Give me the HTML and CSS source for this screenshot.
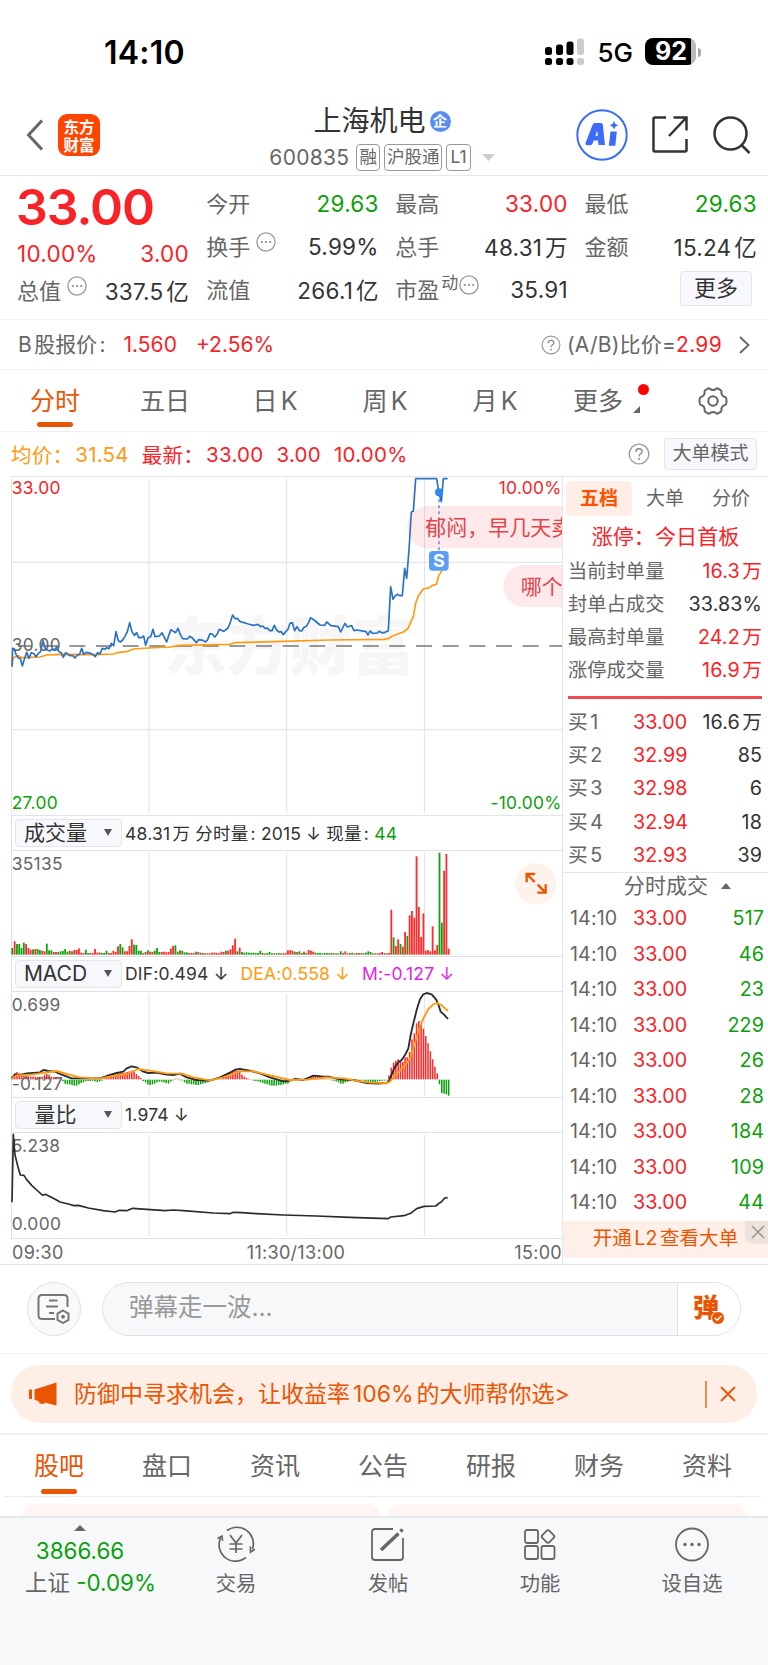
FILE: index.html
```html
<!DOCTYPE html>
<html lang="zh-CN">
<head>
<meta charset="utf-8">
<title>上海机电 600835</title>
<link rel="stylesheet" href="styles.css">
</head>
<body>
<div class="status">
  <span class="clock">14:10</span>
  <div class="status-right">
    <svg class="signal" width="39" height="28" viewBox="0 0 39 28">
      <g fill="#000"><rect y="9" width="7" height="8" rx="2.5"/><rect x="11" y="6.5" width="7" height="10.5" rx="2.5"/><rect x="21.500" y="3.500" width="7" height="13.500" rx="2.500"/><rect y="20" width="7" height="7" rx="2.500"/><rect x="11" y="20" width="7" height="7" rx="2.500"/><rect x="21.500" y="20" width="7" height="7" rx="2.500"/></g>
      <g fill="#ccc"><rect x="32" y="0.500" width="7" height="16.500" rx="2.500"/><rect x="32" y="20" width="7" height="7" rx="2.500"/></g>
    </svg>
    <span class="net">5G</span>
    <div class="battery"><span>92</span></div><i class="battery-tip"></i>
  </div>
</div>

<header class="header">
  <div class="head-left">
    <svg width="18" height="32" viewBox="0 0 18 32"><path d="M16 1.500 2.500 16 16 30.500" fill="none" stroke="#666" stroke-width="3"/></svg>
    <div class="logo"><span>东方</span><span>财富</span></div>
  </div>
  <div class="head-mid">
    <div class="title">上海机电<i class="qi">企</i></div>
    <div class="sub"><span class="code">600835</span><b>融</b><b>沪股通</b><b>L1</b><svg width="13" height="7" viewBox="0 0 13 7"><path d="M0 0h13l-6.500 7z" fill="#ccc"/></svg></div>
  </div>
  <div class="head-right">
    <svg width="52" height="52" viewBox="0 0 52 52"><circle cx="26" cy="26" r="24.700" fill="#fff" stroke="#3b6bf8" stroke-width="2"/><g fill="#3b6bf8"><path fill-rule="evenodd" d="M9.700 33.500 16.500 16q.8-2 2.500-2h6q1.500 0 1.800 1.600L29 36h-6.500l-.5-4.500h-4.200l-1.200 3q-.7 1.800-2.400 1.800h-3.200q-2-.3-1.300-2.800zM19.300 26.800h2.500l-.5-5z"/><path d="M34.500 22.500h6.300l-1.500 14.200h-6.500z"/><path d="m38 12 1.400 2.900 2.900 1.400-2.900 1.400-1.400 2.900-1.400-2.900-2.900-1.400 2.900-1.400z"/></g></svg>
    <svg width="36" height="37" viewBox="0 0 36 37" fill="none" stroke="#333" stroke-width="2.500"><path d="M14 1.500H3q-1.500 0-1.500 1.500v31q0 1.500 1.500 1.500h30q1.500 0 1.500-1.500V23M21.500 1.500h13v13M34 2 17 20"/></svg>
    <svg width="38" height="38" viewBox="0 0 38 38" fill="none" stroke="#333" stroke-width="2.500"><circle cx="17.500" cy="17.500" r="16"/><path d="m28.500 29 8 8"/></svg>
  </div>
</header>

<section class="quote">
  <div class="q-col q-main">
    <div class="price">33.00</div>
    <div class="row red"><span>10.00%</span><span>3.00</span></div>
    <div class="row"><label>总值<svg class="dots" viewBox="0 0 20 20"><use href="#i-dots"/></svg></label><span>337.5亿</span></div>
  </div>
  <div class="q-col">
    <div class="row"><label>今开</label><span class="green">29.63</span></div>
    <div class="row"><label>换手<svg class="dots" viewBox="0 0 20 20"><use href="#i-dots"/></svg></label><span>5.99%</span></div>
    <div class="row"><label>流值</label><span>266.1亿</span></div>
  </div>
  <div class="q-col">
    <div class="row"><label>最高</label><span class="red">33.00</span></div>
    <div class="row"><label>总手</label><span>48.31万</span></div>
    <div class="row"><label>市盈<sup>动</sup><svg class="dots tight" viewBox="0 0 20 20"><use href="#i-dots"/></svg></label><span>35.91</span></div>
  </div>
  <div class="q-col">
    <div class="row"><label>最低</label><span class="green">29.63</span></div>
    <div class="row"><label>金额</label><span>15.24亿</span></div>
    <div class="row end"><button class="more">更多</button></div>
  </div>
</section>

<section class="bshare">
  <span class="b-label">B股报价:</span><span class="red b-price">1.560</span><span class="red">+2.56%</span>
  <svg class="help" viewBox="0 0 22 22"><use href="#i-help"/></svg>
  <span class="b-cmp">(A/B)比价=</span><span class="red ratio">2.99</span>
  <svg class="chev" width="11" height="18" viewBox="0 0 11 18"><path d="m1 1 8.500 8L1 17" fill="none" stroke="#666" stroke-width="1.800"/></svg>
</section>

<nav class="ktabs">
  <a class="on">分时</a><a>五日</a><a>日K</a><a>周K</a><a>月K</a>
  <a class="kmore">更多<i class="reddot"></i><i class="corner"></i></a>
  <a class="gear"><svg width="30" height="30" viewBox="0 0 30 30" fill="none" stroke="#666" stroke-width="2"><circle cx="15" cy="15" r="4.700"/><path d="M10.500 2.300q1.700 0 2.300 1.200 2.200 1 4.400 0 .6-1.200 2.300-1.200l3.600 2.200q.8 1.500.2 2.800.7 2.500 2.900 3.400 1.300 0 2 1.500l.3 2.800-.3 2.800q-.7 1.500-2 1.500-2.200.9-2.900 3.400.6 1.300-.2 2.800l-3.600 2.200q-1.700 0-2.300-1.200-2.200-1-4.400 0-.6 1.200-2.300 1.200l-3.600-2.200q-.8-1.500-.2-2.800-.7-2.500-2.900-3.400-1.300 0-2-1.500L1.500 15l.3-2.800q.7-1.500 2-1.500 2.200-.9 2.900-3.400-.6-1.300.2-2.800z"/></svg></a>
</nav>

<section class="info">
  <span class="orange i1">均价：</span><span class="orange i2">31.54</span>
  <span class="red i3">最新：</span><span class="red i4">33.00</span><span class="red i5">3.00</span><span class="red">10.00%</span>
  <svg class="help big" viewBox="0 0 22 22"><use href="#i-help"/></svg>
  <button class="mode">大单模式</button>
</section>

<main class="board">
  <div class="charts">
    <svg class="c-price" viewBox="33 18 1656 1020">
      <text class="wm" x="492" y="596">东方财富</text>
      <g stroke="#e3e5ec" fill="none" stroke-width="3.500">
        <path d="M447 27V1030M860 27V1030M1273.500 27V1030M34.500 277H1689M34.500 779H1689"/>
        <path d="M34.500 1038V19.500H1689M34.500 1036.500H1689" stroke-width="3"/>
      </g>
      <path d="M54 528H1689" stroke="#777" stroke-width="4.500" stroke-dasharray="48 32" stroke-dashoffset="6"/>
      <text class="ax" x="35" y="544">30.00</text>
      <polyline class="ln avg" points="36,588 40,563 55,557 65,563 120,561 140,555 180,553 290,554 340,552 352,548 380,545 400,537 445,534 510,531 540,526 690,523 705,518 850,514 990,510 1152,508 1167,505 1177,498 1212,485 1224,475 1240,440 1247,400 1255,378 1270,357 1289,353 1297,346 1309,343 1317,315 1324,305 1332,288 1342,272"/>
      <polyline class="ln now" points="36,590 38,535 44,540 48,553 54,563 61,566 67,588 73,568 80,547 87,565 94,548 102,551 108,560 116,549 122,545 129,512 136,537 149,543 156,538 163,540 170,531 177,545 184,548 190,562 197,548 210,557 218,557 225,564 232,555 239,553 245,535 251,553 259,547 272,550 279,554 286,560 293,548 300,552 307,535 314,538 320,533 327,536 334,520 341,527 348,485 355,512 361,516 368,510 375,499 382,485 389,458 396,485 403,496 410,488 416,503 424,503 431,498 437,526 444,503 452,500 459,478 465,500 478,498 486,488 493,502 500,516 506,497 513,479 520,484 527,488 534,475 541,494 548,506 562,507 569,499 576,503 589,518 596,509 609,511 617,516 623,509 630,491 637,492 644,501 651,493 658,478 671,484 684,474 691,457 698,435 705,446 712,445 719,454 745,462 761,466 774,463 781,470 788,468 795,475 802,474 809,482 816,482 823,466 830,480 837,486 844,485 850,494 857,485 864,478 870,460 877,458 884,482 891,470 898,482 905,483 912,472 919,469 926,457 932,443 946,453 960,465 974,466 980,456 993,467 1015,470 1022,486 1035,460 1042,471 1055,467 1062,482 1070,480 1098,485 1104,495 1110,483 1118,490 1131,489 1138,484 1145,488 1152,488 1165,482 1172,350 1179,388 1185,378 1192,373 1200,377 1207,377 1214,295 1220,325 1227,240 1234,126 1240,124 1247,26 1310,26 1317,70 1324,95 1330,26 1343,26"/>
      <path d="M1317 70V244" stroke="#3d83f0" stroke-width="4" stroke-dasharray="9 9"/>
      <circle cx="1317" cy="67" r="12" fill="#2f86f6"/>
      <path d="M1689 108H1285a63 63 0 0 0 0 127H1689zM1689 285H1573a63 63 0 0 0 0 126H1689z" fill="#f04a50" fill-opacity=".12"/>
      <text class="dm" x="1276" y="195">郁闷，早几天卖</text>
      <text class="dm" x="1562" y="371">哪个</text>
      <rect x="1287" y="243" width="59" height="59" rx="11" fill="#5c9df8"/>
      <text class="mark" x="1316.500" y="292">S</text>
      <text class="ax r" x="35" y="73">33.00</text><text class="ax g" x="35" y="1016">27.00</text>
      <text class="ax r e" x="1685" y="73">10.00%</text><text class="ax g e" x="1685" y="1016">-10.00%</text>
    </svg>

    <div class="ind"><button>成交量<i></i></button><span class="vol-info">48.31万 分时量: 2015 <em>↓</em> 现量: <span class="green">44</span></span></div>
    <svg class="c-sub" id="vol" viewBox="33 120 1656 321">
      <path class="grid" d="M447 128V432M860 128V432M1273.500 128V432"/>
      <path class="frame" d="M34.500 441V121.500H1689M34.500 439.500H1689"/>
      <g id="vol-bars"></g>
      <text class="ax" x="35" y="180">35135</text>
      <circle cx="1607.500" cy="220.500" r="61.500" fill="#fef2ec"/>
      <path d="M1605 192h-25v25M1580 192l24 24M1612 248h25v-25M1637 248l-24-24" fill="none" stroke="#ea5504" stroke-width="7"/>
    </svg>

    <div class="ind"><button>MACD<i></i></button><span class="macd-info"><span>DIF:0.494 <em>↓</em></span><span class="orange">DEA:0.558 <em>↓</em></span><span class="purple">M:-0.127 <em>↓</em></span></span></div>
    <svg class="c-sub" viewBox="33 543 1656 321">
      <path class="grid" d="M447 551V856M860 551V856M1273.500 551V856"/>
      <path class="frame" d="M34.500 864V544.500H1689M34.500 862.500H1689"/>
      <g id="macd-bars"></g>
      <text class="ax" x="35" y="603">0.699</text><text class="ax" x="35" y="840">-0.127</text>
      <polyline class="ln thick dark" points="36,805 45,793 60,795 80,790 120,787 130,780 145,783 165,785 185,794 215,805 260,805 300,805 320,798 350,789 370,785 380,775 395,769 412,773 430,785 445,789 470,788 500,794 520,795 540,791 560,802 590,810 630,812 660,802 690,788 705,779 720,777 745,781 780,790 810,802 850,814 870,812 885,807 910,810 940,797 965,799 985,800 1020,808 1060,810 1100,819 1130,821 1160,819 1168,810 1175,793 1185,770 1195,757 1205,750 1215,735 1225,715 1232,675 1240,640 1250,600 1260,568 1270,553 1280,549 1295,553 1308,568 1315,583 1322,605 1332,614 1344,627"/>
      <polyline class="ln thick avg" points="36,805 50,796 100,793 170,783 200,792 240,802 300,806 340,798 380,792 415,777 450,782 500,790 545,791 580,802 630,811 670,802 720,784 760,784 800,794 870,810 920,809 980,802 1030,805 1080,814 1110,818 1160,819 1170,815 1185,796 1200,782 1220,760 1230,745 1240,715 1255,665 1270,625 1285,597 1300,583 1312,579 1325,586 1344,603"/>
    </svg>

    <div class="ind"><button>量比<i></i></button><span class="macd-info"><span>1.974 <em>↓</em></span></span></div>
    <svg class="c-sub" viewBox="33 276 1656 321">
      <path class="grid" d="M447 284V588M860 284V588M1273.500 284V588"/>
      <path class="frame" d="M34.500 597V277.500H1689M34.500 595.500H1689"/>
      <text class="ax" x="35" y="336">5.238</text><text class="ax" x="35" y="571">0.000</text>
      <polyline class="ln dark" points="36,487 40,283 42,310 45,345 55,385 61,405 72,406 80,419 95,436 110,450 128,466 136,463 160,475 180,486 205,492 222,497 235,496 265,504 310,512 345,516 358,511 380,512 398,505 440,508 495,512 520,510 550,512 640,519 690,521 700,517 725,518 770,521 850,525 950,528 1050,532 1165,536 1172,531 1212,527 1232,520 1250,506 1272,499 1307,498 1317,490 1324,486 1334,474 1343,473"/>
    </svg>
    <div class="times"><span>09:30</span><span class="noon">11:30/13:00</span><span>15:00</span></div>
  </div>

  <aside class="side">
    <div class="stabs"><a class="on">五档</a><a>大单</a><a>分价</a></div>
    <div class="limit">涨停：今日首板</div>
    <div class="stat"><label>当前封单量</label><span class="red">16.3万</span></div>
    <div class="stat"><label>封单占成交</label><span>33.83%</span></div>
    <div class="stat"><label>最高封单量</label><span class="red">24.2万</span></div>
    <div class="stat"><label>涨停成交量</label><span class="red">16.9万</span></div>
    <div class="redbar"></div>
    <div class="lv"><label>买1</label><b>33.00</b><span>16.6万</span></div>
    <div class="lv"><label>买2</label><b>32.99</b><span>85</span></div>
    <div class="lv"><label>买3</label><b>32.98</b><span>6</span></div>
    <div class="lv"><label>买4</label><b>32.94</b><span>18</span></div>
    <div class="lv"><label>买5</label><b>32.93</b><span>39</span></div>
    <div class="deal-head">分时成交<i></i></div>
    <div class="deal"><label>14:10</label><b>33.00</b><span>517</span></div>
    <div class="deal"><label>14:10</label><b>33.00</b><span>46</span></div>
    <div class="deal"><label>14:10</label><b>33.00</b><span>23</span></div>
    <div class="deal"><label>14:10</label><b>33.00</b><span>229</span></div>
    <div class="deal"><label>14:10</label><b>33.00</b><span>26</span></div>
    <div class="deal"><label>14:10</label><b>33.00</b><span>28</span></div>
    <div class="deal"><label>14:10</label><b>33.00</b><span>184</span></div>
    <div class="deal"><label>14:10</label><b>33.00</b><span>109</span></div>
    <div class="deal"><label>14:10</label><b>33.00</b><span>44</span></div>
    <div class="l2">开通L2查看大单<i><svg width="14" height="14" viewBox="0 0 14 14"><path d="m1 1 12 12M13 1 1 13" stroke="#999" stroke-width="1.600"/></svg></i></div>
  </aside>
</main>

<section class="say">
  <div class="say-set"><svg width="34" height="30" viewBox="0 0 34 30" fill="none" stroke="#777" stroke-width="2"><path d="M18 25H5q-3.500 0-3.500-3.500v-17Q1.500 1 5 1h22q3.500 0 3.500 3.500V13M12 6.500h8.500M9 12.500h12M12 19h5"/><path d="m26 16.500 5.500 3.100v6.300L26 29l-5.500-3.100v-6.300z"/><circle cx="26" cy="22.800" r="1" /></svg></div>
  <div class="say-box"><span>弹幕走一波...</span><div class="dan">弹<svg width="14" height="14" viewBox="0 0 14 14"><circle cx="7" cy="7" r="6.500" fill="#ea5504" stroke="#fff"/><path d="m3.800 7 2.400 2.300L10.300 5" fill="none" stroke="#fff" stroke-width="1.500"/></svg></div></div>
</section>

<section class="promo-wrap"><div class="promo">
  <svg width="28" height="24" viewBox="0 0 28 24" fill="#ea5504"><path d="M0 7.500h3v9.500H0zM5.500 7.500 27.500.5v23l-12-3v1.500l-5-.5-.5-2-4.500-2z"/></svg>
  <span>防御中寻求机会，让收益率106%的大师帮你选&gt;</span>
  <i></i>
  <svg width="16" height="16" viewBox="0 0 16 16"><path d="m1 1 14 14M15 1 1 15" stroke="#ea5504" stroke-width="1.800"/></svg>
</div></section>

<nav class="ftabs"><a class="on">股吧</a><a>盘口</a><a>资讯</a><a>公告</a><a>研报</a><a>财务</a><a>资料</a></nav>
<div class="cards"><i></i><i></i></div>

<footer class="bar">
  <div class="idx"><i></i><span class="green">3866.66</span><span class="idx-l">上证 <em class="green">-0.09%</em></span></div>
  <div class="act"><svg width="40" height="36" viewBox="0 0 40 36" fill="none" stroke="#666" stroke-width="1.700"><path d="M11 4.500A16.500 16.500 0 0 1 36.500 23M38.800 23.300 34.500 26.200 34.400 20.500M30 31.500A16.500 16.500 0 0 1 4.500 12M1.500 12.500l4.500-2.400.6 4.800M14 9l6 8 6-8M13.500 18h13M13.500 23h13M20 17v10"/></svg><span>交易</span></div>
  <div class="act"><svg width="36" height="36" viewBox="0 0 36 36" fill="none" stroke="#666" stroke-width="1.800"><path d="M23 3H5Q2 3 2 6v25q0 3 3 3h25q3 0 3-3V12"/><path d="M11 24 28.500 7.500M30.500 5.500l2-2" stroke-width="3.500"/></svg><span>发帖</span></div>
  <div class="act"><svg width="36" height="36" viewBox="0 0 36 36" fill="none" stroke="#666" stroke-width="1.800"><rect x="3" y="4" width="13" height="13" rx="2"/><rect x="3" y="20" width="13" height="13" rx="2"/><rect x="19.500" y="20" width="13" height="13" rx="2"/><rect x="21" y="5.500" width="10" height="10" rx="2" transform="rotate(45 26 10.500)"/></svg><span>功能</span></div>
  <div class="act"><svg width="36" height="36" viewBox="0 0 36 36"><circle cx="18" cy="18.500" r="16" fill="none" stroke="#666" stroke-width="1.800"/><g fill="#666"><circle cx="11" cy="18.500" r="1.700"/><circle cx="18" cy="18.500" r="1.700"/><circle cx="25" cy="18.500" r="1.700"/></g></svg><span>设自选</span></div>
</footer>

<svg class="defs" width="0" height="0">
  <symbol id="i-dots" viewBox="0 0 20 20"><circle cx="10" cy="10" r="9.100" fill="none" stroke="#999" stroke-width="1.300"/><g fill="#888"><circle cx="5.800" cy="10" r="1.100"/><circle cx="10" cy="10" r="1.100"/><circle cx="14.200" cy="10" r="1.100"/></g></symbol>
  <symbol id="i-help" viewBox="0 0 22 22"><circle cx="11" cy="11" r="9.800" fill="none" stroke="#999" stroke-width="1.300"/><path d="M7.900 9q0-3.200 3.100-3.200T14.100 8.700c0 2-3.100 2.300-3.100 4.800" fill="none" stroke="#888" stroke-width="1.400"/><circle cx="11" cy="16" r="1" fill="#888"/></symbol>
</svg>
<script src="chart.js"></script>
</body>
</html>
```
FILE: chart.js
```js
// Minute bars: positive = up (red), negative = down (green). One entry per minute from 09:30.
const STEP = 6.89, X0 = 36;

const volume = [-20,40,-32,-32,-20,-36,32,20,15,-16,17,-17,-14,12,10,-33,-13,-13,8,8,-8,-10,-11,-17,-9,12,-10,14,14,19,
  6,5,-15,-5,5,5,17,6,7,-5,-5,-12,5,5,12,8,25,-32,-22,10,10,26,46,-30,-29,-12,-12,5,8,-13,
  9,8,-12,-20,-8,8,9,7,8,18,26,-28,-9,13,-12,-7,-7,5,5,-5,9,-8,6,5,4,-4,4,6,6,5,
  4,9,8,-12,12,16,28,48,-10,21,-8,-6,-7,-6,-5,-6,-5,-5,-12,-5,4,-5,-8,-4,4,-4,-5,-4,4,5,
  13,14,12,-9,8,-10,-5,9,-5,14,12,9,-6,-5,-5,-4,-5,-5,5,-5,-4,4,-4,-10,5,10,-4,5,-6,4,
  -5,5,-5,4,-6,-10,-8,4,-4,4,5,8,-5,4,5,135,-52,26,46,-32,24,68,-56,118,131,111,295,143,53,124,
  12,14,10,85,13,29,-306,-96,252,302,18];

const macd = [10,18,22,18,14,12,12,10,8,8,8,6,8,8,14,16,14,8,6,4,2,-1,-4,-12,-14,-14,-16,-18,-18,-14,
  -10,-8,-4,-4,-4,-3,-5,-7,-5,-3,4,6,8,10,12,14,18,20,20,20,22,24,26,24,16,10,4,-4,-8,-14,
  -16,-14,-12,-8,-6,-6,-8,-10,-12,-6,-2,2,2,-2,-2,-8,-12,-12,-14,-14,-16,-16,-14,-12,-10,-8,-4,-2,-1,2,
  4,6,10,16,20,24,28,28,26,22,14,8,4,2,-1,-3,-4,-5,-8,-10,-12,-14,-16,-18,-18,-18,-16,-16,-14,-12,
  -12,-3,2,2,-1,-1,1,3,4,6,8,8,10,8,8,3,2,1,-1,-2,-3,-5,-8,-12,-12,-8,-6,-4,-3,-3,
  -3,-2,-2,-3,-5,-6,-8,-8,-8,-6,-4,-3,-3,-2,12,35,50,56,60,56,52,66,66,82,120,138,168,175,165,152,
  130,108,84,60,38,18,-14,-40,-42,-44,-48];

const NS = 'http://www.w3.org/2000/svg';
function bar(group, x, y, w, h, color) {
  const r = document.createElementNS(NS, 'rect');
  r.setAttribute('x', x - w / 2);
  r.setAttribute('y', y);
  r.setAttribute('width', w);
  r.setAttribute('height', h);
  r.setAttribute('fill', color);
  group.appendChild(r);
}
const RED = '#ff2a2a', GREEN = '#0da10d';
const vg = document.getElementById('vol-bars');
volume.forEach((v, i) => bar(vg, X0 + 1 + i * STEP, 434 - Math.abs(v), 5.4, Math.abs(v), v > 0 ? RED : GREEN));
const mg = document.getElementById('macd-bars');
macd.forEach((v, i) => bar(mg, X0 + 1 + i * STEP, v > 0 ? 808 - v : 809, 4.6, Math.abs(v), v > 0 ? RED : GREEN));
```
FILE: styles.css
```css
* { box-sizing: border-box; }
body { margin: 0; width: 768px; height: 1665px; overflow: hidden; background: #fff; color: #333;
  font-family: Inter, "Noto Sans CJK SC", sans-serif; font-size: 22px; font-weight: 400; text-autospace: normal; }
i, em { font-style: normal; }
b { font-weight: 400; }
svg { display: block; flex: none; }
button { font: inherit; color: inherit; background: #f6f8fb; border: 1.5px solid #e3e5ec; border-radius: 4px; padding: 0; }
.defs { position: absolute; }
.red { color: #fa2227; }
.green { color: #0ba00b; }
.orange { color: #ff9a12; }
.purple { color: #e11ee8; }

.status { height: 88px; display: flex; justify-content: space-between; padding: 16px 67px 0 104px; align-items: center; color: #000; }
.clock { font-size: 32px; font-weight: 600; letter-spacing: .2px; }
.status-right { display: flex; align-items: center; }
.net { font-size: 26px; margin: 1px 12px 0 13px; font-weight: 500; }
.battery { width: 51px; height: 27px; border-radius: 8px; background: linear-gradient(90deg, #000 46.5px, #bbb 46.5px); color: #fff; font-weight: 700; font-size: 25px; line-height: 27px; padding-left: 10px; margin-top: -1px; }
.battery-tip { width: 3px; height: 9px; margin-left: 2px; border-radius: 0 4px 4px 0; background: #aaa; }

.header { height: 88px; border-bottom: 1.5px solid #e8e8ea; display: grid; grid-template-columns: 200px 1fr 200px; padding: 0 17px 0 26px; }
.head-left { display: flex; align-items: center; gap: 14px; padding-top: 6px; }
.logo { width: 42px; height: 42px; margin-top: -1px; border-radius: 9px; background: #ff4400; color: #fff; font: 700 15.5px/18px "Noto Sans CJK SC", sans-serif; display: flex; flex-direction: column; justify-content: center; align-items: center; }
.head-mid { display: flex; flex-direction: column; align-items: center; margin-left: -13px; }
.title { font-size: 28px; line-height: 36px; margin-top: 15px; display: flex; align-items: center; gap: 4px; }
.qi { width: 21px; height: 21px; border-radius: 50%; background: #5b8def; color: #fff; font-size: 14px; line-height: 20px; text-align: center; font-weight: 700; }
.sub { display: flex; align-items: center; height: 37px; color: #666; font-size: 21px; }
.code { margin-right: 7px; letter-spacing: .3px; }
.sub b { border: 1.3px solid #999; border-radius: 4px; height: 27px; line-height: 24px; font-size: 17.5px; padding: 0 2px; margin-right: 4px; }
.sub b:nth-of-type(3) { padding: 0 3px; margin-right: 3px; }
.sub svg { margin-left: 8px; }
.head-right { display: flex; align-items: center; justify-content: flex-end; padding-top: 5px; margin-left: -20px; }
.head-right svg:nth-child(1) { margin-right: 24px; }
.head-right svg:nth-child(2) { margin-right: 25px; }

.quote { height: 143px; padding: 6px 11px 0 17px; display: grid; grid-template-columns: repeat(4, 172.5px); justify-content: space-between; }
.row { height: 43px; display: flex; justify-content: space-between; align-items: center; white-space: nowrap; }
.row label { color: #666; display: flex; align-items: center; margin-top: -3px; }
.row > span { font-size: 22.5px; letter-spacing: .25px; margin-top: -1px; }
.q-main .row { width: 172px; }
.q-main .row.red { height: 46px; }
.q-main .row:last-child { height: 27px; }
.price { height: 49px; line-height: 51px; font-size: 50px; font-weight: 600; color: #fa2227; letter-spacing: -1px; margin-left: -1px; }
.dots { width: 20px; height: 20px; margin: -6px 0 0 6px; }
.dots.tight { margin-left: 1px; }
.row sup { font-size: 17px; line-height: 20px; margin-top: -11px; margin-left: 2px; vertical-align: 0; }
.row.end { justify-content: flex-end; }
.more { width: 72px; height: 35px; margin-right: 5px; margin-top: -3px; line-height: 30px; }

.bshare { height: 51px; border-top: 1.5px solid #f0f0f2; border-bottom: 1.5px solid #f0f0f2; display: flex; align-items: center; padding: 1px 18px; font-size: 21px; color: #666; }
.b-label, .b-cmp { margin-top: -3px; }
.b-label { letter-spacing: -.1px; }
.b-price { margin: 0 19px 0 18px; }
.b-cmp { letter-spacing: .2px; }
.help { width: 20px; height: 20px; margin: 0 6px 0 auto; }
.help.big { width: 22px; height: 22px; margin: 0 14px 0 auto; }
.ratio { margin-right: 17px; letter-spacing: .3px; }

.ktabs { height: 62px; border-bottom: 1.5px solid #f0f0f2; display: flex; font-size: 25px; color: #666; }
.ktabs a { width: 110px; text-align: center; line-height: 63px; position: relative; }
.ktabs .on, .ftabs .on { color: #ea5504; }
.ktabs .on::after, .ftabs .on::after { content: ""; position: absolute; left: 50%; margin-left: -18px; width: 36px; height: 5.5px; border-radius: 3px; background: #ea5504; bottom: 4px; }
.kmore { padding-right: 14px; }
.reddot { position: absolute; left: 88px; top: 14px; width: 11px; height: 11px; border-radius: 50%; background: #f00; }
.corner { position: absolute; left: 83px; top: 36px; border-left: 7px solid transparent; border-bottom: 7px solid #666; }
.ktabs .gear { width: 106px; display: flex; justify-content: center; align-items: center; }

.info { height: 44px; display: flex; align-items: center; padding: 0 11px; font-size: 20.5px; white-space: nowrap; }
.info span { letter-spacing: .25px; }
.info .i2, .info .i4, .info .i5 { margin-right: 13px; }
.info .i1 { margin-right: 2px; }
.info .i3 { margin-right: 2px; }
.mode { width: 93px; height: 32px; font-size: 19px; line-height: 28px; color: #666; }

.board { height: 789px; display: grid; grid-template-columns: 551px 206px; padding-left: 11px; border-bottom: 1.5px solid #e3e5ec; }
.charts { overflow: hidden; }
.c-price { width: 552px; height: 340px; }
.c-sub { width: 552px; height: 107px; }
.ln { fill: none; stroke-width: 5; stroke-linejoin: round; }
.thick { stroke-width: 5.5; }
.now { stroke: #2b72c4; } .avg { stroke: #ff9a12; } .dark { stroke: #2b2b2b; }
.grid { stroke: #e3e5ec; stroke-width: 3.5; }
.frame { stroke: #dfe1e8; stroke-width: 3.5; fill: none; }
.ax { font-size: 52px; fill: #666; letter-spacing: 1px; }
.ax.r { fill: #fa2227; } .ax.g { fill: #0ba00b; } .ax.e { text-anchor: end; }
.dm { font-size: 63px; fill: #e3444b; }
.mark { font-size: 54px; font-weight: 700; fill: #fff; text-anchor: middle; }
.wm { font-size: 188px; font-weight: 900; fill: #f6f6f7; }
.ind { height: 34.500px; display: flex; align-items: center; font-size: 17.5px; white-space: pre; padding-left: 3px; border-left: 1px solid #dfe1e8; }
.ind > span { letter-spacing: .2px; margin-top: -2px; }
.ind + svg { margin-top: -.5px; }
.ind button { width: 107px; height: 28px; font-size: 21px; line-height: 25px; display: flex; justify-content: center; position: relative; padding-right: 26px; margin-right: 3px; }
.ind button i { position: absolute; right: 9px; top: 9px; border: 4.500px solid transparent; border-top: 7px solid #555; border-bottom: 0; }
.macd-info { display: flex; gap: 12px; }
.times { display: flex; justify-content: space-between; font-size: 18px; letter-spacing: .3px; color: #666; line-height: 28px; padding-left: 1px; }
.noon { margin-left: 14px; }

.side { border-left: 1.5px solid #e3e5ec; border-top: 1.5px solid #e3e5ec; font-size: 19.7px; letter-spacing: .1px; }
.side label { color: #666; }
.stabs { display: flex; padding: 4px 0 0 3px; color: #666; }
.stabs a { width: 66px; height: 35px; line-height: 35px; text-align: center; font-size: 19px; }
.stabs .on { background: #ffeee5; border-radius: 5px; color: #ff5000; font-weight: 700; }
.limit { text-align: center; height: 38.500px; line-height: 42px; font-size: 21px; color: #fa2227; }
.stat, .lv { height: 33.3px; line-height: 33.3px; display: flex; justify-content: space-between; padding: 0 6px 0 5px; }
.stat label { font-size: 19.2px; }
.redbar { height: 3.5px; background: #ee4a4f; margin: 8px 6px 6.500px 5px; }
.lv, .deal { display: grid; grid-template-columns: 65px 60px 1fr; }
.lv b, .deal b { color: #fa2227; }
.lv span, .deal span { text-align: right; }
.deal-head { margin-top: -.5px; height: 29.500px; border-top: 1.5px solid #e3e5ec; line-height: 28px; text-align: center; font-size: 21px; color: #666; display: flex; justify-content: center; align-items: center; gap: 13px; padding-left: 24px; padding-bottom: 1px; }
.deal-head i { border: 5.500px solid transparent; border-bottom: 6px solid #666; border-top: 0; }
.deal { height: 35.5px; line-height: 35px; padding: 0 4px 0 7px; grid-template-columns: 63px 60px 1fr; }
.deal span { color: #0ba00b; }
.l2 { position: relative; height: 37px; line-height: 35px; background: #fef0e9; color: #ea5504; text-align: center; font-size: 19.5px; }
.l2 i { position: absolute; right: 0; top: 0; width: 23px; height: 23px; background: #eee2dc; border-radius: 0 0 0 9px; display: flex; align-items: center; justify-content: center; padding-left: 2px; }

.say { height: 89px; border-bottom: 1.5px solid #f2f2f4; display: flex; align-items: center; padding: 0 0 0 27px; gap: 21px; }
.say-set { width: 54px; height: 54px; border: 1.3px solid #dfe1e8; border-radius: 50%; background: #f8f9fb; display: flex; align-items: center; justify-content: center; }
.say-box { width: 639px; height: 54px; border: 1.3px solid #dfe1e8; border-radius: 27px; background: #f6f8fa; overflow: hidden; display: flex; justify-content: space-between; padding-left: 26px; color: #999; font-size: 24.5px; line-height: 48px; text-autospace: no-autospace; }
.dan { position: relative; width: 63px; background: #fff; border-left: 1.3px solid #dfe1e8; color: #ea5504; font-weight: 900; font-size: 26px; padding-left: 15px; line-height: 49px; }
.dan svg { position: absolute; left: 33px; top: 28px; }

.promo-wrap { height: 81px; padding: 11px 11px 0; border-bottom: 2px solid #f0f0f1; }
.promo { height: 58px; border-radius: 29px; background: #fdeee6; color: #ea5504; font-size: 23px; display: flex; align-items: center; padding: 0 21px 0 18px; }
.promo span { margin: -4px 0 0 17px; white-space: nowrap; }
.promo i { width: 1.6px; height: 27px; background: #f08a55; margin: 0 13px 0 auto; }

.ftabs { height: 62px; display: flex; margin: 0 7px 0 5px; border-bottom: 1.5px solid #ececee; font-size: 25px; color: #666; }
.ftabs a { flex: 1; text-align: center; line-height: 62px; position: relative; }
.ftabs .on::after { bottom: 2px; }
.cards { height: 19px; padding: 7px 22px 0; display: flex; gap: 8px; }
.cards i { flex: 1; background: #fff6f4; border-radius: 14px 14px 0 0; }

.bar { height: 149px; background: #f6f8fa; border-top: 2px solid #e6e8ec; display: grid; grid-template-columns: 160px 152px 152px 152px 152px; color: #666; font-size: 20.3px; }
.act { display: flex; flex-direction: column; align-items: center; padding-top: 8px; }
.act svg { height: 36px; }
.act span { line-height: 30px; margin-top: 7px; }
.idx { display: flex; flex-direction: column; align-items: center; font-size: 22.4px; white-space: nowrap; }
.idx i { margin-top: 7px; border: 6px solid transparent; border-top: 0; border-bottom: 6.500px solid #666; }
.idx span { line-height: 32px; margin-top: 4px; }
.idx .idx-l { margin: 0 0 0 21px; }
```
